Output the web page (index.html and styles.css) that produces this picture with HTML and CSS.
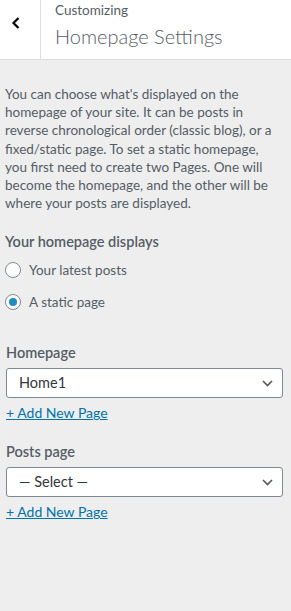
FILE: index.html
```html
<!DOCTYPE html>
<html lang="en">
<head>
  <meta charset="UTF-8">
  <meta name="viewport" content="width=device-width, initial-scale=1.0">
  <title>Homepage Settings</title>
  <link rel="stylesheet" href="styles.css">
</head>
<body>
  <!-- Заголовок панели -->
  <div class="panel-head">
    <button class="back" aria-label="Back">
      <svg width="10" height="12" viewBox="0 0 10 12"><path d="M7.5 1 L2.5 6 L7.5 11" fill="none" stroke="#000" stroke-width="2.2"/></svg>
    </button>
    <div class="panel-title">
      <div class="action">Customizing</div>
      <h3>Homepage Settings</h3>
    </div>
  </div>

  <div class="panel-body">
    <p class="description">You can choose what's displayed on the homepage of your site. It can be posts in reverse chronological order (classic blog), or a fixed/static page. To set a static homepage, you first need to create two Pages. One will become the homepage, and the other will be where your posts are displayed.</p>

    <!-- Что показывать -->
    <div class="control radios">
      <span class="control-title">Your homepage displays</span>
      <label class="radio"><span class="dot"></span>Your latest posts</label>
      <label class="radio checked"><span class="dot"></span>A static page</label>
    </div>

    <!-- Главная страница -->
    <div class="control">
      <span class="control-title">Homepage</span>
      <div class="select">Home1
        <svg class="caret" width="11" height="7" viewBox="0 0 11 7"><path d="M1 1 L5.5 5.5 L10 1" fill="none" stroke="#555" stroke-width="1.6"/></svg>
      </div>
      <a class="add-new" href="#">+ Add New Page</a>
    </div>

    <!-- Страница записей -->
    <div class="control">
      <span class="control-title">Posts page</span>
      <div class="select">&mdash; Select &mdash;
        <svg class="caret" width="11" height="7" viewBox="0 0 11 7"><path d="M1 1 L5.5 5.5 L10 1" fill="none" stroke="#555" stroke-width="1.6"/></svg>
      </div>
      <a class="add-new" href="#">+ Add New Page</a>
    </div>
  </div>
</body>
</html>
```

FILE: styles.css
```css
body {
  margin: 0;
  background: #eee;
  font-family: Lato, "Open Sans", sans-serif;
  font-size: 13.5px;
  color: #555d66;
}

/* Заголовок панели */
.panel-head {
  display: flex;
  height: 59px;
  background: #fff;
  border-bottom: 1px solid #ddd;
}

.back {
  width: 41px;
  border: 0;
  border-right: 1px solid #ddd;
  background: #fff;
  padding: 17px 0 0 11px;
  display: flex;
  align-items: flex-start;
  justify-content: flex-start;
}

.panel-title {
  padding-left: 14px;
}

.action {
  font-size: 13.5px;
  line-height: 20px;
  color: #555d66;
}

.panel-title h3 {
  margin: 3px 0 0;
  font-size: 20px;
  font-weight: 300;
  line-height: 26px;
  color: #555d66;
}

/* Содержимое */
.panel-body {
  padding: 0 8px 0 6px;
}

.description {
  margin: 25px 0 0 -1px;
  line-height: 18.2px;
}

.control {
  margin-top: 20px;
}

.radios {
  margin-bottom: 30px;
}

.radios + .control {
  margin-top: 0;
}

.control-title {
  display: block;
  font-size: 14.5px;
  font-weight: 600;
  line-height: 20px;
  margin-bottom: 5px;
}

.radios .control-title {
  margin-bottom: 7px;
  margin-left: -1px;
}

.radio {
  display: flex;
  align-items: center;
  height: 22px;
  margin-left: -1px;
}

.radio + .radio {
  margin-top: 10px;
}

.dot {
  width: 14px;
  height: 14px;
  border: 1px solid #7e8993;
  border-radius: 50%;
  background: #fff;
  margin-right: 8px;
  display: flex;
  align-items: center;
  justify-content: center;
}

.checked .dot::after {
  content: "";
  width: 8px;
  height: 8px;
  border-radius: 50%;
  background: #1e8cbe;
}

.select {
  position: relative;
  height: 28px;
  line-height: 28px;
  border: 1px solid #7e8993;
  border-radius: 3px;
  background: #fff;
  padding-left: 12px;
  font-size: 14.5px;
  color: #32373c;
}

.caret {
  position: absolute;
  right: 9px;
  top: 11px;
}

.add-new {
  display: inline-block;
  margin-top: 6px;
  line-height: 18px;
  color: #0073aa;
  font-size: 14px;
}
```
